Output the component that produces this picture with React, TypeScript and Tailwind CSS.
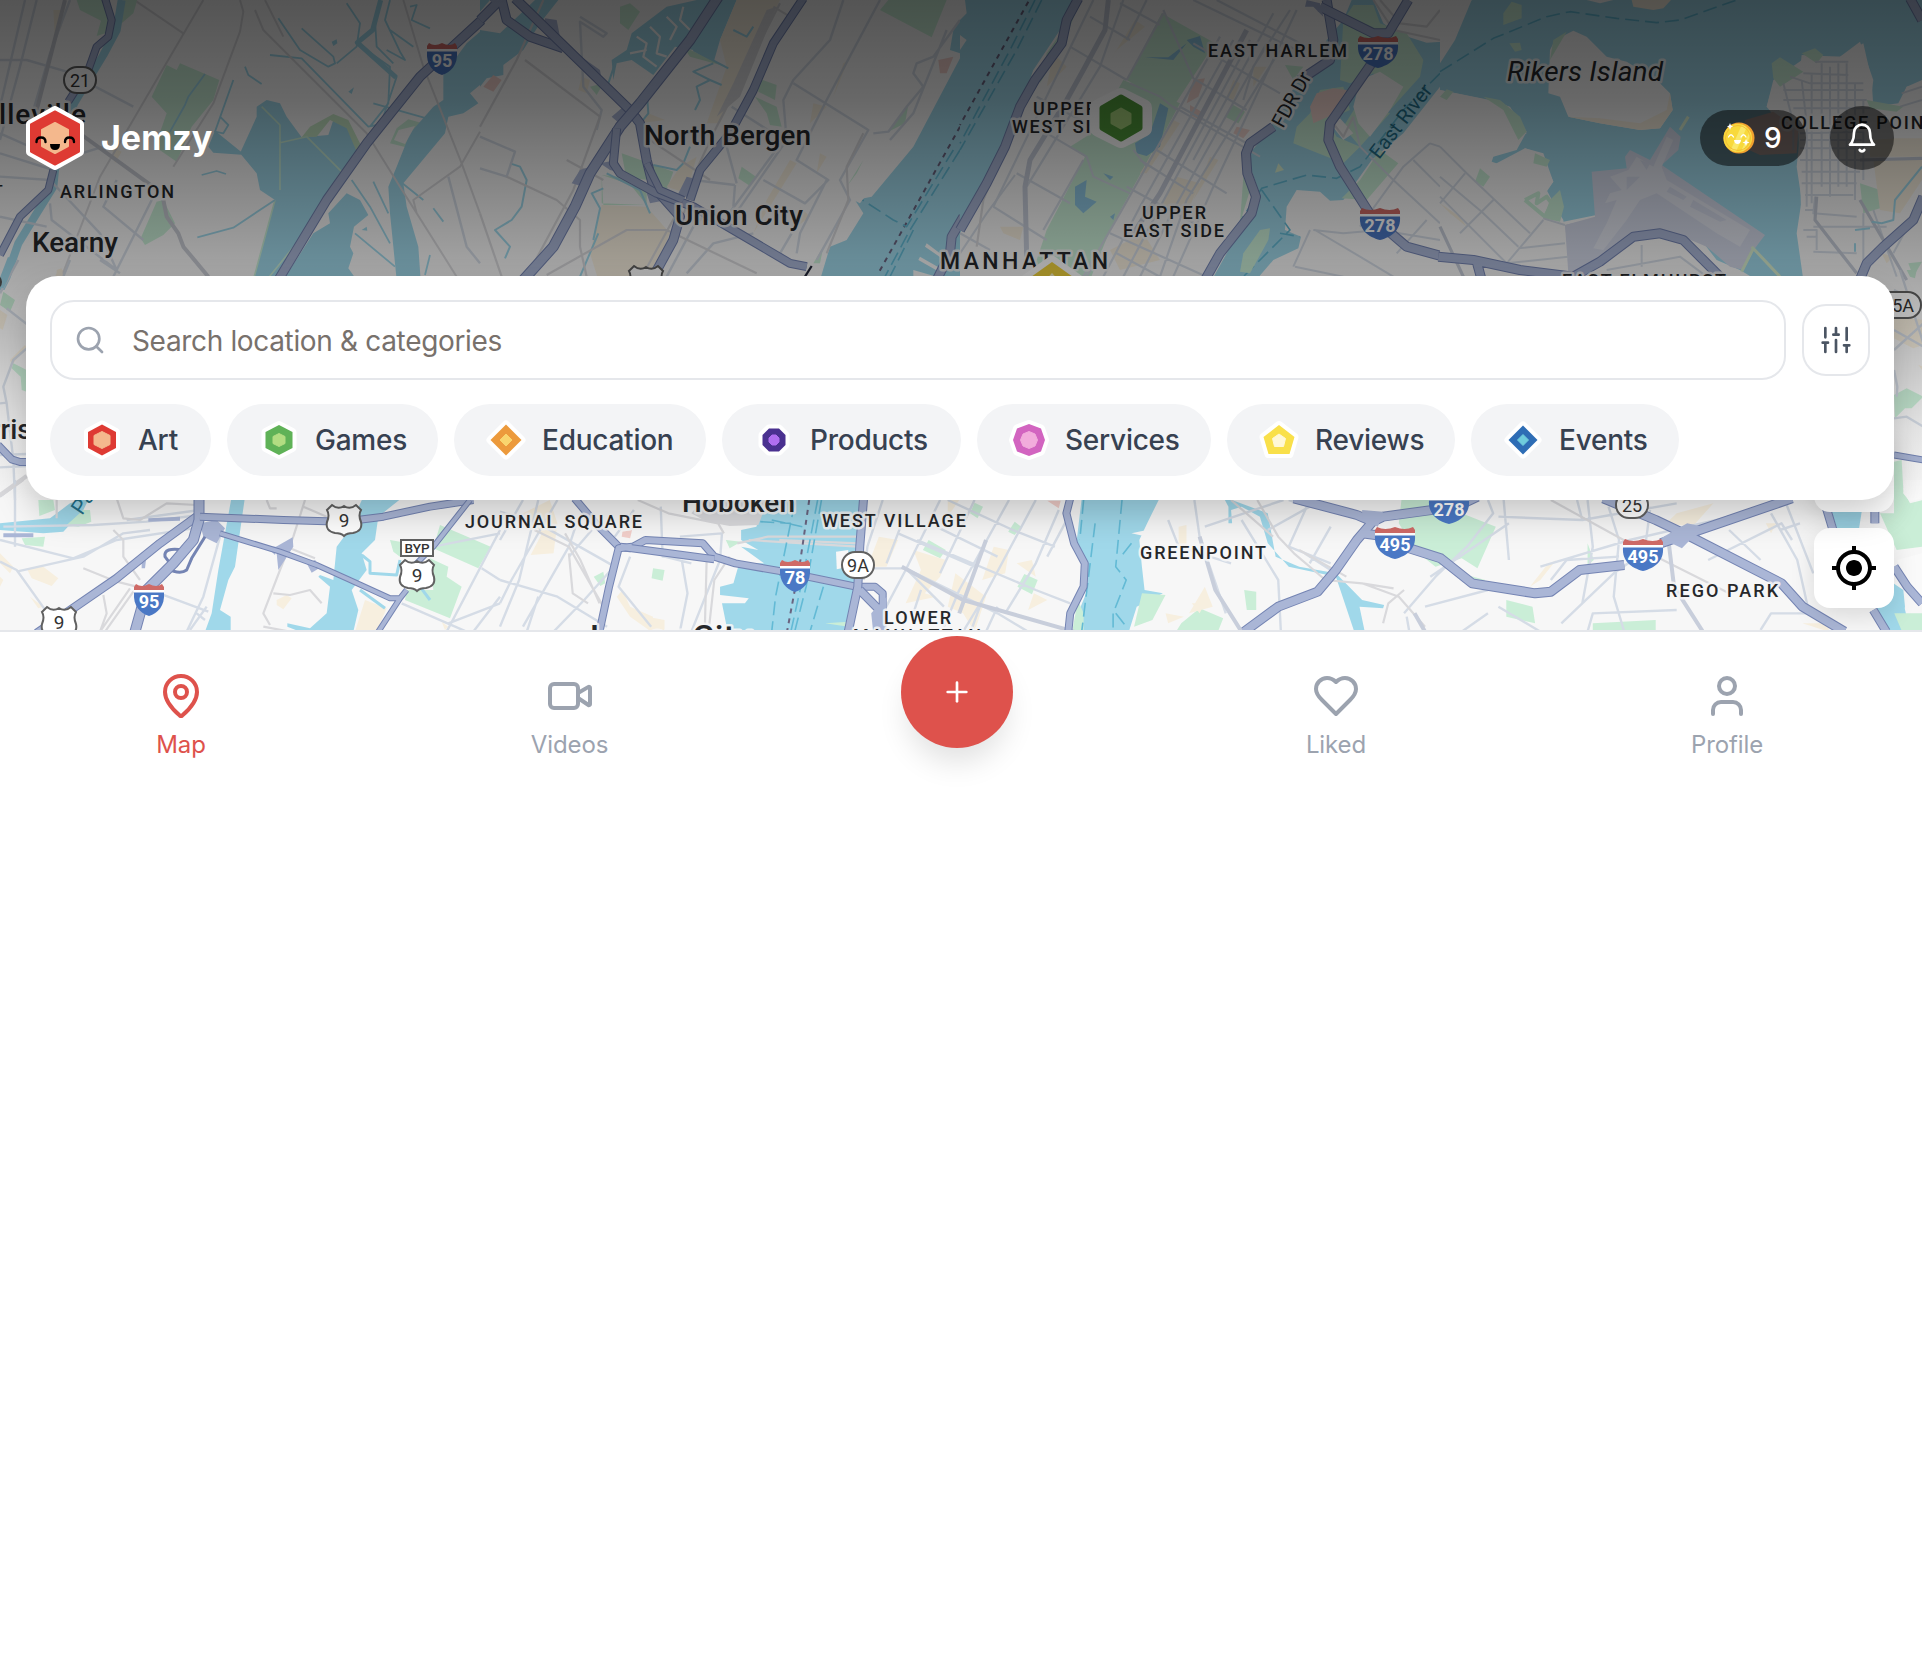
import React from "react";
import { FiBell, FiSearch } from "react-icons/fi";
import { MdMyLocation } from "react-icons/md";
import { MapPin, Video, Plus } from "lucide-react";

const WATER = "#a0d8ea";
const PARK = "#caeed7";
const SAND = "#f7efdf";
const GREY = "#d9d9dc";

function Lines({ d, c = "#d5dce6", w = 2.4, dash }: { d: string; c?: string; w?: number; dash?: string }) {
  return <path d={d} fill="none" stroke={c} strokeWidth={w} strokeDasharray={dash} strokeLinejoin="round" />;
}

function Highway({ d, w = 8 }: { d: string; w?: number }) {
  return (
    <>
      <path d={d} fill="none" stroke="#7484b3" strokeWidth={w + 2} strokeLinejoin="round" />
      <path d={d} fill="none" stroke="#aab6d6" strokeWidth={w} strokeLinejoin="round" />
    </>
  );
}

function Area({ d, c }: { d: string; c: string }) {
  return <path d={d} fill={c} />;
}

function Interstate({ x, y, n }: { x: number; y: number; n: string }) {
  const s = n.length > 2 ? 20 : 15;
  return (
    <g transform={`translate(${x} ${y})`}>
      <path d={`M${-s} -10V-13L${-s + 2} -16Q${-s / 2} -12 0 -16Q${s / 2} -12 ${s - 2} -16L${s} -13V-8H${-s}Z`} fill="#cf6a66" />
      <path d={`M${-s} -10H${s}V-7H${-s}Z`} fill="#fff" />
      <path d={`M${-s} -7.5H${s}C${s + 1} 6 ${s * 0.6} 13 0 16C${-s * 0.6} 13 ${-s - 1} 6 ${-s} -7.5Z`} fill="#4a78c5" />
      <text y="8" textAnchor="middle" fill="#fff" fontSize="18" fontWeight="700">{n}</text>
    </g>
  );
}

function USRoute({ x, y, n = "9" }: { x: number; y: number; n?: string }) {
  return (
    <g transform={`translate(${x} ${y})`}>
      <path
        d="M-12 -15Q-6 -10 0 -14Q6 -10 12 -15L17 -10Q14 -5 17 2Q19 11 9 13Q3 13 0 16Q-3 13 -9 13Q-19 11 -17 2Q-14 -5 -17 -10Z"
        fill="#fff" stroke="#616161" strokeWidth="2"
      />
      {n && <text y="7" textAnchor="middle" fill="#333" fontSize="19">{n}</text>}
    </g>
  );
}

function StateRoute({ x, y, n, w = 32 }: { x: number; y: number; n: string; w?: number }) {
  return (
    <g transform={`translate(${x} ${y})`}>
      <rect x={-w / 2} y="-13" width={w} height="26" rx="13" fill="#fff" stroke="#616161" strokeWidth="2" />
      <text y="6.5" textAnchor="middle" fill="#333" fontSize="18">{n}</text>
    </g>
  );
}

function Label({ x, y, len, size = 18, children, ...rest }: React.SVGProps<SVGTextElement> & { len: number; size?: number }) {
  return (
    <text
      x={x} y={y} textLength={len} fontSize={size} fontWeight={500} fill="#26282b"
      stroke="#f7f7f7" strokeOpacity={0.85} strokeWidth={5} strokeLinejoin="round" paintOrder="stroke" {...rest}
    >
      {children}
    </text>
  );
}

function MapCanvas() {
  return (
    <svg
      width="1922" height="630" viewBox="0 0 1922 630"
      className="block [&_path]:[vector-effect:non-scaling-stroke]"
      style={{ fontFamily: "Roboto, sans-serif" }}
    >
      <defs>
        <clipPath id="clip-west"><rect x="960" y="80" width="131" height="80" /></clipPath>
        <clipPath id="top"><rect width="1922" height="290" /></clipPath>
      </defs>
      <rect width="1922" height="630" fill="#f7f7f7" />

      <g clipPath="url(#top)">
        {/* Kearny and the Meadowlands */}
        <g transform="scale(.33333)">
          <Area c={PARK} d="M230 0H330V95L290 108L303 62L240 30ZM370 0H412L400 40L365 70ZM500 195L530 210L540 190L658 240L640 300L575 380L530 485L465 440L500 340L455 290ZM470 605L490 600L525 670L490 705L435 735L422 715ZM1225 358L1268 370L1230 445L1170 430L1190 385Z" />
          <Area c={WATER} d="M770 320L800 300L840 310L860 350L905 412L985 405L1000 360L1040 360L1050 400L1090 440L1030 530L930 680L830 840H760L825 600L780 570L770 520L745 490L720 460L770 350ZM645 392L735 465L640 458L625 440ZM1040 580L1080 600L1105 645L1062 680L1050 740L1060 760L1045 805L1070 840H850L940 700L990 670L985 640ZM1440 95L1400 130L1330 225V300L1300 320L1230 400L1190 500L1165 560L1170 640L1190 840H1262L1255 740L1220 620L1210 550L1260 490L1335 400L1345 350L1390 340L1435 310L1410 280L1440 255ZM995 125L1010 118L1012 130L1000 138ZM1045 275L1062 262L1055 282ZM1085 690L1100 680L1102 692Z" />
          <Area c="#c6e6c5" d="M905 412L930 380L1000 342L1045 360L1085 440L1070 455L1040 385L990 360L950 410Z" />
          <Area c="#f7f7f7" d="M1196 390L1245 378L1215 432L1182 420Z" />
          <Area c={SAND} d="M160 30L190 30L185 80L165 115ZM335 440L365 455L345 490ZM175 810L190 810L185 830L165 830Z" />
          <Lines c={WATER} w={8} d="M365 0L350 90L310 165L222 310L165 510L160 560L110 640L55 730L20 830L0 870" />
          <Lines c={PARK} w={1.6} d="M785 320L840 375V570M840 428L920 410L1030 520L1085 445M825 600L760 840M1020 520L930 680L800 840" />
          <Lines c={WATER} w={1.8} d="M835 55L900 150L985 200L1005 190L1000 170L905 85M1010 190L1070 140L1080 70L1040 10M1070 130L1170 200L1165 310L1110 380M1140 0L1115 90L1070 125L1190 230L1150 350M1125 60L1130 140L1180 190M1230 20L1250 15L1235 60L1290 85M1170 90L1240 140M810 165L905 175L1105 380L1130 375M605 525L650 513L678 522M592 712L700 683L825 600M700 240L645 395L670 400L685 375L660 350M735 200L745 225L785 252M615 222L565 290L555 315L510 395M1055 540L1110 620L1170 730M1120 545L1165 640M1065 700L1185 800M1195 540L1270 600M1300 625L1330 665M1290 765L1275 825M1120 310L1280 355M1170 0L1155 60L1200 155L1215 180L1160 150" />
          <Lines c={WATER} w={5} d="M1142 0L1118 90L1072 128L1188 232" />
          <Lines c={GREY} w={2} d="M610 0L440 290L300 530L185 830M720 0L730 35L720 95L640 310L520 500M410 5L550 100M765 30L790 90L1100 400L1200 560L1370 830M795 0L850 110M1210 0L1270 200L1385 490L1440 640M1440 395L1380 500L1240 600L1250 640" />
          <Lines d="M75 0L0 320M110 0L60 200L0 420M210 0L150 160L100 330M0 180L80 180L200 215L400 320M0 460L160 510M0 400L180 480L310 440M0 530L150 540L300 700L350 810L460 590M0 650L140 680M350 540L310 620L430 720M150 610L155 660L350 810L340 830M1345 530L1400 740L1440 790" />
          <Lines w={4} c="#c9ccd4" d="M225 390L500 590M195 0L110 330M490 600L500 650L535 700L550 740L625 830" />
          <Highway w={6} d="M315 -5L335 60L325 110L290 140L265 210L205 305" />
          <Highway w={6} d="M160 510L145 570L60 650L0 765" />
          <Highway w={8} d="M1445 60L1260 230L1100 430L980 600L835 840" />
        </g>

        {/* North Bergen and Union City */}
        <g transform="translate(480 0) scale(.33333)">
          <Area c={WATER} d="M0 90L60 100L165 0H235L180 70L130 150L70 195V225L20 235L0 260ZM0 0H30L0 35ZM455 100L560 20L650 0H770L720 120L700 190L640 150L585 140L520 225L455 180L410 190L400 240L395 180L440 150ZM1440 175L1300 440L1175 590L1125 600L1150 640L1100 720L1050 740L1020 840H1440ZM1440 60L1420 90L1410 150L1440 160Z" />
          <Area c={PARK} d="M420 20L450 10L480 35L445 90L420 70ZM425 460L580 515L560 570L505 540L365 525V610L500 615L440 540ZM365 525L500 570V615H370ZM785 500L828 530L810 558L775 535ZM835 235L890 255L885 300L835 275ZM825 290L890 320L905 380L870 375L860 340ZM1200 30L1225 0H1400L1355 112ZM1285 315L1225 395L1275 370ZM1150 480L1100 560L1130 520ZM610 140L740 200L630 170ZM1030 740L1000 790H1020ZM330 260L370 250L350 285Z" />
          <Area c={SAND} d="M365 615L500 620L570 700L510 840H355L330 760ZM770 0L900 0L720 370L680 370L740 200L720 120ZM600 500L560 560L620 580L650 470ZM505 340L555 360L480 370ZM1090 190L1105 180L1060 290ZM1000 310L1040 320L990 370ZM930 480L950 490L820 700L860 600ZM1020 460L1040 470L1010 520ZM960 620L990 650L950 680ZM305 230L330 240L320 280L295 270Z" />
          <Area c="#f0cfca" d="M10 260L40 225L65 240L40 275ZM1375 180L1420 170L1400 220H1380Z" />
          <Area c={GREY} d="M860 30L890 20L780 290L710 350L760 250Z" />
          <Lines c="#f7f7f7" w={2.2} d="M470 110L500 130L490 170L530 200M510 80L540 110L530 160L560 170M560 50L590 80L570 120M610 20L600 60L630 90M450 160L500 150" />
          <Lines c={WATER} w={2} d="M700 190L640 215L690 240L650 260L660 300L645 330M690 240L725 255M500 270L505 340L485 365M630 440L610 490L590 510L520 495M90 490L120 500L140 540L125 620L95 660L45 690L90 740L75 775M370 565L335 580L360 625L340 720M380 520L480 570L510 640M355 700L300 830M405 190L385 250M640 150L745 205M760 90L800 110L820 80" />
          <Lines d="M300 50L380 100L370 110L300 65L310 260L365 330L350 390M1090 0L1050 120L940 240L910 300L920 420L740 680M1200 0L1040 300L950 480L1045 540L975 610L850 540M940 250L1165 390L1080 540L1110 600L1060 690L1010 780M0 410L105 455L80 530L0 505M1440 60L1360 170L1310 190L1300 220L1330 260L1280 320L1225 395L1180 400M755 320L910 420L740 650M640 540L765 555M770 550L740 440M765 555L760 620M935 700L900 760L940 790M1230 420L1300 340L1400 90M1040 540L960 700L950 760M560 830L640 680L700 620M620 820L700 730L820 700" />
          <Lines c={GREY} w={2.2} d="M190 0L110 180L0 380M135 180L360 350L280 570L140 830M80 530L230 600L300 660V740L320 830M0 640L65 830M200 825L440 690L560 690L830 820M480 840L590 640L700 400L900 10M520 840L620 620M370 540L260 480M480 400L690 540M880 20L930 50M1150 400L1100 500L1105 600L1040 760" />
          <Area c="#aab6d6" d="M395 350L430 320L460 350L430 380ZM275 550L300 510L330 500L310 560ZM360 490L410 480L430 520L390 510ZM500 580L540 560L560 600L510 610ZM195 55L230 60L240 110L190 80ZM310 175L360 210L365 240L300 190ZM620 530L660 540L640 590L590 590Z" />
          <Highway w={8} d="M60 0L0 60M30 0L60 -20L80 60L150 110L250 145" />
          <Highway w={8} d="M105 -5L280 165L450 330L480 370L500 480L520 560L600 650L580 720L520 830" />
          <Highway w={9} d="M715 -10L630 120L480 310L420 380L330 520L285 620L220 740L130 840" />
          <Highway w={7} d="M410 385L400 490L420 520L530 580L640 620L760 690L930 790L980 800" />
          <Highway w={7} d="M970 -5L880 130L820 270L750 400L660 510L630 600" />
          <Highway w={6} d="M500 490L540 570L610 600" />
          <Lines c="#222638" w={2.2} d="M995 798L975 830" />
          <Lines c="#6a6480" w={2} dash="5 5" d="M1440 380L1195 820" />
          <Lines c="#63bad5" w={1.6} dash="14 6" d="M1440 450L1290 690L1215 830M1420 450L1280 680L1240 660L1140 595M1300 690L1230 830" />
          <Area c="#f7f7f7" d="M1300 810L1370 830H1300ZM1340 730L1400 775V785L1335 740ZM1320 770L1390 810L1385 820L1315 780ZM1120 600L1150 570L1155 590L1140 610ZM1210 500L1230 495L1225 520Z" />
          <Highway w={8} d="M1450 650L1415 710L1410 760L1370 840" />
        </g>

        {/* Manhattan, Central Park and the East River */}
        <g transform="translate(960 0) scale(.33333)">
          <Area c={WATER} d="M0 0H345L300 90L220 210L180 320L130 440L60 600L0 700ZM1100 120L1150 60L1175 0H1440V260L1330 400L1235 480L1150 600L1110 602L1080 575L1010 570L980 620L975 690L1023 710L1015 745L940 780L880 850H750L850 670L895 570L860 470L920 400L1010 250L1080 200Z" />
          <Area c="#f7f7f7" d="M0 60L20 40L15 0H0ZM0 105L20 120L0 150ZM1240 0H1446V125L1400 128L1310 100L1270 70Z" />
          <Area c={PARK} d="M605 40L765 130L640 320L500 240ZM330 440L410 390L580 450L450 690L390 840H210L260 690L375 470ZM490 240L660 310L580 460L400 400ZM820 315L855 335L835 370L795 350ZM1150 60L1180 15L1240 15L1260 70L1340 100L1390 180L1380 230L1290 330L1240 220L1170 250L1140 240ZM1080 270L1150 260L1170 330L1100 360L1130 410L1200 440L1150 490L1050 450L1000 430L1010 380L1050 340ZM1200 440L1290 340L1200 300L1150 380ZM1260 450L1315 490L1220 600L1145 595L1200 540ZM850 530L870 570L840 670ZM975 195L1030 200L1000 240ZM350 30L310 130L240 250L260 160Z" />
          <Area c="#f7f7f7" d="M1200 240L1260 215L1330 260L1290 330L1230 410L1195 370L1180 320ZM1110 370L1140 355L1180 400L1150 420Z" />
          <Area c="#f2d6d0" d="M1070 280L1120 265L1160 270L1150 330L1060 370L1050 320ZM700 240L735 235L715 290L680 310ZM830 380L870 390L850 415L820 400ZM690 315L725 335L720 360L690 345Z" />
          <Area c={SAND} d="M525 60L555 80L470 150L420 230ZM650 530L720 550L680 640L600 620ZM120 680L190 680L180 720L130 700ZM820 240L840 250L820 300L800 290ZM640 360L660 370L560 520L540 520ZM750 470L775 480L700 600ZM450 750L550 700L600 780L480 810ZM280 160L320 200L260 260ZM880 200L920 200L880 260Z" />
          <Area c="#8fc7e3" d="M680 120L720 108L735 160L700 140ZM600 310L625 325L600 440L560 468L530 460L525 430L570 400ZM345 560L380 540L375 590L410 605L370 640L345 615ZM430 520L460 530L450 540ZM450 650L465 640L460 660ZM555 172H625L680 130L640 180Z" />
          <Lines w={2.2} d="M390 50L510 120M610 30L700 235L860 330M330 140L500 240M640 320L900 470M230 290L400 380M210 370L380 470M170 520L330 610M100 620L260 720M0 700L90 750M480 10L600 75M700 130L960 280M500 560L740 690M590 450L800 580M540 480L700 580M660 320L860 430M400 0L100 620M490 0L420 200L200 560M610 40L500 240M370 480L250 690M780 110L480 640L370 830M820 120L540 620L430 830M870 120L590 640L490 830M920 130L640 630L540 830M960 150L680 600L600 830M1010 30L760 560L640 830M700 0L1010 150M770 0L1020 130M940 40L700 480M560 0L500 120M990 30L880 200L850 300M450 700L740 830M470 760L600 830M380 830L420 760" />
          <Lines w={5} c="#c8cedb" d="M445 0L435 90L370 210L320 300L210 480L195 560L200 770M860 90L600 580L520 700" />
          <Lines w={2} d="M510 250L600 290L650 330M380 470L400 530L510 580M520 450L560 500M165 525L80 640L0 760M1360 480L1440 560M1060 690L1150 700L1260 690L1440 720M1065 690L1200 770L1300 830M1410 430L1330 500L1200 680M1440 440L1410 430M1400 660L1310 760M1005 800L1150 830M1000 800L1050 690M1180 350L1200 440L1300 540L1440 670" />
          <Lines c={GREY} w={2.2} d="M1240 0L1300 90L1440 120M1260 0L1320 70L1400 80L1440 30M110 500L70 600L50 740M1120 370L1150 410L1180 350" />
          <Lines c="#63bad5" w={1.6} dash="14 6" d="M245 0L170 150L0 450M225 0L150 150L0 430M1440 220L1330 330L1200 500L1130 535L1040 525L905 565L850 650L760 790M905 570L990 690L900 780L850 830M960 700L1020 710" />
          <Lines c="#6a6480" w={2} dash="5 5" d="M205 5L0 375" />
          <Area c={PARK} d="M900 690L930 685L925 720L870 820L840 815L850 760Z" />
          <Area c="#d9efd0" d="M955 490L972 510L945 518Z" />
          <Highway w={8} d="M355 -5L320 60L305 130L225 240L180 320L135 440L80 550L0 690" />
          <Highway w={8} d="M1100 0L1120 120L1110 180L1020 240M940 380L870 430L858 460L862 520L888 590L875 640L780 760L735 840" />
          <Highway w={8} d="M1080 20L1240 100L1285 100L1345 0M1235 190L1110 370L1105 420L1140 500L1235 650L1340 740L1450 770" />
          <Area c="#aab6d6" d="M1040 0L1080 10L1090 50L1060 20L1035 20ZM255 180L290 160L270 190Z" />
        </g>

        {/* Rikers Island, LaGuardia and College Point */}
        <g transform="translate(1440 0) scale(.33333)">
          <Area c={WATER} d="M95 0H1446V250L1400 260L1375 310L1300 320L1295 240L1270 130L1200 170L1085 165L1080 210L1000 250L980 320L1020 370L1075 400L1080 520L1085 700L1100 840H950L900 810L830 780L690 600L370 665L320 570L340 545L310 460L255 445L200 500L140 480L260 400L190 310L0 270V190L45 120Z" />
          <Area c="#f7f7f7" d="M330 150L345 120L400 92L440 110L500 170L560 185L650 240L690 280L698 330L660 385L600 390L480 370L385 350L360 290L325 280ZM0 270L150 300L210 320L260 395L230 450L160 470L150 500L255 445L300 460L320 500L340 545L320 575L370 660L380 840H0ZM1000 240L1100 170L1200 170L1260 125L1300 240L1290 320L1370 330L1400 260L1446 240V840H1090L1070 700L1085 600L1070 500L1080 400L1050 360L980 320ZM0 120L95 0H0ZM440 0H520L480 10Z" />
          <Area c={PARK} d="M190 40L215 5L245 15L245 55L190 75ZM208 130L240 128L245 150L225 155ZM995 190L1020 172L1090 215L1020 260L1000 235ZM1085 160L1125 145L1150 165L1130 190ZM1280 300L1390 320L1370 335L1290 325ZM1260 550L1320 570L1320 625L1270 640ZM120 505L150 530L130 560L105 545ZM130 290L180 300L240 350L260 395L235 420L190 330ZM330 600L360 570L372 620L360 665L310 655ZM285 460L330 480L320 500L280 490ZM0 290L20 268L40 275L20 300ZM340 120L380 95L330 180ZM1405 790L1446 785L1420 830Z" />
          <Lines c={PARK} w={4} d="M255 600L295 580L290 610L320 590L335 610L315 650L255 600" />
          <Area c={SAND} d="M575 0H693L670 25L640 30L580 20ZM690 280L698 330L660 385L600 390L480 370L385 350L480 355L600 370L680 330ZM1300 480L1446 480V540L1380 640L1320 630ZM1370 415H1446V470H1290V420ZM0 610L60 650L80 680L30 640ZM1325 760L1360 770L1340 790Z" />
          <Area c="#f2d6d0" d="M915 360L1000 335L1075 390L1070 460L960 465L905 440Z" />
          <Area c="#d3d8e8" d="M455 515L560 505L555 470L570 450L630 480L690 380L722 410L715 450L665 495L975 705L945 745L910 810L870 800L800 740L740 715L640 700L570 720L470 790L390 800L375 675L465 650Z" />
          <Area c="#d3d8e8" d="M375 675L470 655L640 690L480 790L440 820L385 820Z" />
          <Area c="#e1e4ee" d="M510 530L565 510L590 470L640 500L680 410L700 420L665 500L680 540L930 690L900 740L830 700L650 580L600 600L560 660L490 750L460 745L500 670L530 600L495 610L510 580L545 570Z" />
          <Area c="#d3d8e8" d="M560 530L600 530L560 570ZM690 560L740 590L730 600L680 575ZM760 600L860 660L840 665L750 620ZM600 480L630 490L620 510Z" />
          <Lines d="M1030 250L1060 370V450M1085 240L1100 370V620M1115 220V610M1145 190V560M1170 200V590M1195 190V560M1220 190V560M1245 250V600M1270 300V540M1125 185H1225M1090 220L1225 225M1050 230L1110 250H1270M1030 270H1270M1030 300H1280M1060 325H1290M1080 400L1270 395M1080 420H1265M1080 445H1260M1080 480H1260M1085 515H1260M1085 550H1250M1095 585H1240M1125 590L1120 640L1250 650M1095 630H1125V660L1200 760M1090 690H1130V750M1120 680H1340M1100 710H1130M1120 755L1250 760M1270 640V780M1385 280L1446 260M1380 320L1446 300" w={2} />
          <Lines w={2} d="M0 440L80 520L270 700M75 520L0 610M0 530L125 635L235 740M160 600L60 700M235 745L375 730M200 790L385 770M310 660L200 790M0 590L200 790M310 655L375 675M605 735V800M500 810L720 770L800 830M1446 600L1360 760M1300 630L1370 830" />
          <Lines w={3.2} c="#c6ccd8" d="M1260 480L1446 475M1260 600L1400 840M1130 590L1125 660L1250 820M0 680L70 830" />
          <Lines c={WATER} w={2} d="M1446 500L1365 600L1360 660L1325 670L1295 665M1245 730V755M1245 690L1290 685" />
          <Lines c="#d9efd0" w={3} d="M935 740L1020 830M940 745L905 815M720 390L745 350" />
          <Lines c="#63bad5" w={1.6} dash="14 6" d="M0 215L160 115L320 50L390 35L530 55L650 68L720 60L890 0" />
          <Highway w={8} d="M-5 770L100 780L240 810L400 830L480 785L580 710L660 700L730 720L780 770L850 840M110 785L125 840M1410 -5L1446 60M1450 590L1420 660L1330 740L1280 790L1255 850" />
        </g>
      </g>

      {/* Harrison */}
      <g transform="translate(0 260) scale(.33333)">
        <Area c={PARK} d="M10 95L45 120L30 155L0 135ZM40 310L80 330V395L65 390L62 350L35 325Z" />
        <Area c={SAND} d="M0 150L22 165L8 210L0 205ZM75 255L80 262L35 315L30 300ZM170 30L185 25L190 50H170Z" />
        <Lines d="M55 0L0 100M20 145L80 192M80 265L40 300L10 380L20 430L40 600L45 720M0 430L20 428M0 622L80 618M0 710L80 650M0 585L80 582M210 0L190 50M300 0L360 40" />
        <Lines c={GREY} w={4} d="M0 705L80 648" />
        <Lines c={WATER} w={8} d="M35 -5L10 60L0 80" />
        <Highway d="M-6 555L35 598L60 606H90" w={6} />
      </g>
      <circle cx="-6" cy="282" r="8" fill="#555" />

      {/* Flushing */}
      <g transform="translate(1780 270) scale(.33333)">
        <Area c={PARK} d="M380 0H410L405 25L390 20ZM342 375L380 355L430 380L395 415L375 415L345 445ZM342 575L365 570L370 660L390 700L430 690V830L350 840L300 730H342Z" />
        <Area c={SAND} d="M342 140L430 150V225L400 235L380 225L342 205ZM415 285L430 290V305Z" />
        <Area c={WATER} d="M155 725H245L235 790H175ZM340 940L370 960L375 1010L345 1090H315L320 1050Z" />
        <Lines d="M360 0L430 220M342 60L430 100M342 240L430 160M342 180L430 230M342 300L352 350L350 380M342 445L380 440L430 470M0 780L60 760M20 705L100 910" />
        <Highway w={5} d="M342 555L430 570" />
      </g>

      {/* Newark Bay */}
      <g transform="translate(0 480) scale(.33333)">
        <Area c={WATER} d="M0 130L150 115L210 70L270 50L250 90L190 155L130 160L0 150ZM695 50H735L705 260L685 300L660 390L692 410V455H615L635 400L655 270ZM1090 50H1210L1135 110L1125 180L1085 220L1100 270L1055 330L1075 390L1060 455H900L862 440V430L930 445L980 400L990 320L955 290L960 285L1000 300L1010 200L1040 160Z" />
        <Area c={PARK} d="M115 60H160L165 90L118 108ZM65 175L135 170L130 200L75 195ZM250 90L270 90L274 125L235 140L200 135ZM1320 135L1472 200L1435 265L1300 205ZM1290 235L1345 260L1340 290L1385 320L1350 415L1215 360L1220 330L1300 330ZM1170 180L1200 185V230L1180 215Z" />
        <Area c={SAND} d="M0 220L40 260L30 280L0 250ZM80 265L130 260L175 295L155 318L95 295ZM830 360L860 345L875 355L850 388L830 375ZM1095 360L1160 385L1130 455H1065ZM90 350L130 380L115 385ZM0 290L10 300L0 320ZM1325 425L1345 440L1335 450Z" />
        <Lines c={WATER} w={3} d="M1085 225L1110 245V280L1190 285L1200 240M1080 330L1155 385M1260 320L1290 360" />
        <Lines d="M0 180L220 235L350 180L580 145M45 0V200M10 140L280 135L440 125L600 105M0 245L50 270L150 410M50 275L250 230L370 160L450 150M620 380L570 450M660 170L610 350L560 455M490 345L625 395M590 400L615 420M380 120L600 90M1500 150L1340 455M1205 370L1400 455M1500 300L1445 265M1500 350L1420 455M1210 180L1300 200L1500 160M1345 430L1500 370" />
        <Lines c={GREY} w={2.2} d="M0 50L70 0M170 60V115M350 55L370 115L420 120L500 70L590 75M340 150L370 180V230L420 300M250 265L350 305L410 320M310 345L320 400L300 455M390 325L300 455M400 335L315 455M800 60L810 85L830 85M915 60L880 170M880 170L840 270L790 400L810 435M790 440L870 455M820 340L870 345L930 330L965 370M870 205L945 235M910 80L980 110" />
        <Area c="#aab6d6" d="M600 130L650 120L675 145L650 190L610 170ZM828 200L878 172L880 200L835 270ZM800 200L830 200L825 225ZM920 250L945 240L965 260L935 278ZM445 115L540 110V122L445 125ZM425 250L438 240L435 265H425ZM10 160H100V172H10Z" />
        <Lines c="#7484b3" w={3} d="M550 210Q490 200 495 230L510 250L500 265Q540 285 560 270L575 235L615 170" />
        <Highway w={7} d="M590 110L480 190L350 295L190 405L110 460" />
        <Highway w={9} d="M597 50V120L580 180L520 250L440 330L405 455" />
        <Highway w={6} d="M600 110L850 120L1030 125L1150 110L1290 80L1420 60" />
        <Highway w={4} d="M660 160L840 215L950 255L1050 300L1170 355H1200L1220 330M1240 260L1300 200L1410 60M1200 355L1135 455" />
      </g>

      {/* Hoboken and the Hudson */}
      <g transform="translate(500 480) scale(.3827 .33333)">
        <Area c={WATER} d="M690 55H945V170L935 315L910 455H595L580 370H640L650 355L575 345V320L610 310L625 250H690L630 200L675 210L630 180V150L670 140ZM1520 55H1570V455H1525L1500 430L1535 330V260L1505 200Z" />
        <Area c={GREY} d="M500 100L530 60H700L675 135L600 138L540 125Z" />
        <Area c={PARK} d="M400 265L430 270L425 302L396 295ZM245 290L270 275L275 310L262 318ZM1120 180L1165 210L1150 235L1105 210ZM1370 282L1405 300L1390 343L1352 320ZM1240 68L1262 80L1248 115L1228 100ZM1345 125L1362 140L1345 165L1328 155ZM590 180L630 185L600 205ZM1510 360L1525 400V455H1495ZM850 430L910 425V440Z" />
        <Area c={SAND} d="M60 100L130 60L150 130L140 220L80 225L110 160ZM320 330L340 380L400 410L395 455L340 410L305 350ZM385 410L430 420V455H390ZM1080 210L1165 240L1150 290L1110 340L1140 350L1060 370L1100 270ZM1190 280L1270 350L1240 455L1210 400L1170 380ZM1290 200L1330 210L1320 280L1260 300ZM1350 250L1390 240L1400 290ZM990 170L1040 180L1010 260L960 260ZM1170 60L1200 60L1170 110ZM1395 340L1430 360L1380 390Z" />
        <Area c="#f2cfca" d="M320 155L345 150L340 175L318 170ZM1430 62H1465L1460 85Z" />
        <Area c="#f7f7f7" d="M878 215L910 210V260L880 268Z" />
        <Lines d="M0 95L100 130L300 260M60 60L0 180M150 60L90 180L30 300L0 370M200 130L180 200L60 440M0 300L150 350L280 440M100 60L50 300L0 440M240 150L180 230M290 270L220 360L140 455M350 90L300 170M420 80L425 230L560 240M470 170L580 160L575 240L500 455M340 230L310 320L395 440M100 350L70 455M430 230L500 250M475 240L490 340L470 455M1000 60L960 200L950 300M1060 100L1010 250M1150 60L1060 270L1000 400M1240 60L1150 280M1330 60L1200 330L1160 440M1400 60L1260 360L1210 455M1460 90L1400 250L1320 400M1170 60L1340 150L1450 200M1140 140L1300 230M1090 180L1400 330L1490 370M1050 260L1140 310L1300 400L1380 455M1040 160L1240 260M960 265H1060L1160 380M1100 330L1080 400M1260 360L1230 455M1300 380L1270 455M1490 100L1430 230" />
        <Lines c={GREY} w={2.2} d="M90 150L180 200L270 380M170 160L210 240L260 370M180 220L190 340L230 370M360 60L440 100L570 130L585 160M600 230L560 300L545 455M540 240L535 455M620 190L700 170L935 170M650 180L935 200M730 180L935 190" />
        <Lines c="#c8cedb" w={4} d="M1050 260L1210 360L1500 455M1270 180L1200 400" />
        <Lines c="#63bad5" w={1.6} dash="14 6" d="M770 70L720 350L710 455M830 60L790 300L760 455M840 60L800 320L770 455M845 320L810 455M710 120L790 140M1525 60L1515 180M1555 130L1520 455M680 125L760 130" />
        <Lines c="#6a6480" w={2} dash="5 5" d="M808 60L785 240L750 455" />
        <Highway w={6} d="M195 55L250 130L310 200L340 205L380 180L530 190L560 230L615 250L740 275L930 320L980 320L1000 340V400" />
        <Highway w={6} d="M315 200L560 238M345 200L310 205L285 320L260 455" />
        <Highway w={7} d="M950 55L940 200L935 320L910 455M940 330L1000 400" />
        <Highway w={6} d="M1490 55L1480 100L1500 190L1528 250L1525 320L1490 400L1485 455" />
        <Area c="#aab6d6" d="M970 400L1010 350V455H975Z" />
      </g>

      {/* Greenpoint and Queens */}
      <g transform="translate(1100 480) scale(.52425 .33333)">
        <Area c={WATER} d="M0 50H115L90 130L75 180L80 260L85 330L120 340L70 380L55 455H0ZM235 50L320 100L335 230L380 260L450 280L500 360L542 375L540 385L495 380L505 455H485L450 290L360 260L320 190L305 110L270 80L250 90L252 130H245V80ZM1500 300L1530 350L1540 420L1530 455H1495L1480 380Z" />
        <Area c="#f7f7f7" d="M60 160L90 150V170Z" />
        <Area c={PARK} d="M575 60H635L650 110L690 100L755 140L720 265L690 235L640 260L600 210L570 130ZM80 340L125 345L100 420L65 440ZM275 330L298 335V390H280ZM190 385L235 415L225 455H145L155 430ZM775 360L825 380L830 430L775 410ZM940 430L1060 420V455H940ZM700 285L735 300L715 320ZM930 190L942 240L930 255ZM1515 400H1568V455H1530Z" />
        <Area c="#fafafa" d="M1535 0H1568V55L1545 65L1532 40ZM1520 240L1568 220V370Z" />
        <Area c={SAND} d="M150 140L165 135V200L150 210ZM200 320L215 380L170 400ZM125 400L160 410L130 430ZM850 260L870 240L840 300L820 320ZM1100 100L1170 70L1130 140L1080 130ZM1270 130L1290 130L1280 160ZM1340 430L1390 430V455ZM175 370L200 370L190 400Z" />
        <Lines d="M180 60L190 170L240 400M130 120L150 200L250 250M270 120L340 300L345 455M390 220L440 270M360 60L400 80L320 150M400 60L360 200L440 250M440 140L400 250M740 60L750 100L700 200L640 290L580 400M760 110L920 120L1100 70M770 60L780 240M780 130L630 290M930 60L940 200L920 370M910 60L920 120M970 80L990 180L980 350L1000 455M1050 80L1040 200M1160 240L1300 130L1320 180M1280 100L1330 240L1350 380M585 410L590 455M740 400L690 455M620 380L740 330M860 300L890 240L990 230M840 260L1010 180L1230 100M1260 450L1280 400L1350 400M1200 150L1260 240M880 430L980 280L1080 170M760 380L840 455M1100 390L940 400L930 455M200 140L350 60" />
        <Lines c={GREY} w={2.2} d="M300 60L340 170L370 220L430 300L500 310L570 350L620 440M250 60L330 170M860 60L1010 190L1200 340M380 210L470 290M540 430L550 370L580 330M500 310L560 325" />
        <Lines c="#c8cedb" w={4} d="M1085 190L1095 320L1150 455M190 170L220 330L270 455M600 400L620 455" />
        <Lines c="#63bad5" w={1.6} dash="14 6" d="M42 60L30 260L50 300L25 400V455M60 190L40 230M30 400L50 440" />
        <Highway w={8} d="M370 55L490 105L520 125L540 110L680 80L720 50M520 125L490 180L450 270L415 335L340 380L275 455M590 205L650 235L710 310L830 340L860 335L915 270L1000 255M500 160L550 170" />
        <Highway w={8} d="M960 55L1060 120L1120 165L1300 310L1340 380L1420 455M1070 190L1320 55" />
        <Highway w={7} d="M1380 55L1400 160M1478 55V130M1515 260L1540 320L1568 370M1475 390L1500 455" />
        <Area c="#aab6d6" d="M1070 175L1120 130L1150 140L1110 205ZM500 90L540 95L530 140L500 120Z" />
      </g>

      {/* place names */}
      <Label x={-36} y={124} len={122} size={28}>Belleville</Label>
      <Label x={60} y={198} len={114}>ARLINGTON</Label>
      <Label x={-8} y={198} len={11} fontWeight={400}>T</Label>
      <Label x={32} y={252} len={86} size={28}>Kearny</Label>
      <Label x={-44} y={439} len={107} size={28}>Harrison</Label>
      <Label x={644} y={145} len={167} size={28}>North Bergen</Label>
      <Label x={675} y={225} len={128} size={28}>Union City</Label>
      <Label x={1208} y={57} len={139}>EAST HARLEM</Label>
      <g clipPath="url(#clip-west)">
        <Label x={1033} y={115} len={64}>UPPER</Label>
        <Label x={1012} y={133} len={104}>WEST SIDE</Label>
      </g>
      <Label x={1142} y={219} len={64}>UPPER</Label>
      <Label x={1123} y={237} len={101}>EAST SIDE</Label>
      <Label x={940} y={269} len={168} size={23}>MANHATTAN</Label>
      <Label x={1507} y={81} len={156} size={28} fontStyle="italic" fontWeight={400}>Rikers Island</Label>
      <Label x={1781} y={129} len={155}>COLLEGE POINT</Label>
      <Label x={1562} y={287} len={164}>EAST ELMHURST</Label>
      <Label x={465} y={528} len={177}>JOURNAL SQUARE</Label>
      <Label x={682} y={512} len={113} size={28}>Hoboken</Label>
      <Label x={822} y={527} len={144}>WEST VILLAGE</Label>
      <Label x={884} y={624} len={67}>LOWER</Label>
      <Label x={853} y={642} len={128}>MANHATTAN</Label>
      <Label x={580} y={649} len={172} size={34}>Jersey City</Label>
      <Label x={1140} y={559} len={126}>GREENPOINT</Label>
      <Label x={1666} y={597} len={112}>REGO PARK</Label>
      <Label x={0} y={0} len={60} size={20} fontWeight={400} transform="translate(1283 129) rotate(-61)">FDR Dr</Label>
      <Label x={0} y={0} len={88} size={20} fontWeight={400} fill="#23708a" stroke="none" transform="translate(1379 160) rotate(-52)">East River</Label>
      <Label x={0} y={0} len={92} size={21} fontWeight={400} fill="#23708a" stroke="none" transform="translate(82 516) rotate(-56)">Passaic R</Label>

      <StateRoute x={80} y={80} n="21" />
      <Interstate x={442} y={59} n="95" />
      <USRoute x={646} y={281} n="" />
      <Interstate x={1378} y={52} n="278" />
      <Interstate x={1380} y={224} n="278" />
      <StateRoute x={1898} y={305} n="25A" w={46} />
      <USRoute x={344} y={520} />
      <rect x="401" y="540" width="32" height="16" fill="#fff" stroke="#616161" strokeWidth="2" />
      <text x="417" y="553" textAnchor="middle" fontSize="13.5" fontWeight="500" fill="#333">BYP</text>
      <USRoute x={417} y={575} />
      <USRoute x={59} y={622} />
      <Interstate x={149} y={600} n="95" />
      <Interstate x={795} y={576} n="78" />
      <StateRoute x={858} y={565} n="9A" />
      <Interstate x={1449} y={508} n="278" />
      <Interstate x={1395} y={543} n="495" />
      <Interstate x={1643} y={555} n="495" />
      <StateRoute x={1632} y={505} n="25" />

      {/* pins */}
      <path d="M1121 97L1143 108V128L1121 139L1099 128V108Z" fill="#fff" stroke="#fff" strokeWidth="18" strokeLinejoin="round" />
      <path d="M1121 97L1140 108V128L1121 139L1102 128V108Z" fill="#4f9739" stroke="#4f9739" strokeWidth="5" strokeLinejoin="round" />
      <path d="M1121 109L1130 114V123L1121 128L1112 123V114Z" fill="#a3cc78" stroke="#a3cc78" strokeWidth="3" strokeLinejoin="round" />
      <path d="M1052 262L1080 282L1070 310H1034L1024 282Z" fill="#f1d33d" stroke="#fff" strokeWidth="12" strokeLinejoin="round" paintOrder="stroke" />
      <path d="M1052 273L1062 284H1042Z" fill="#fff6c8" />
    </svg>
  );
}

function Gem({ points, inner, color, core }: { points: string; inner: string; color: string; core: string }) {
  return (
    <svg width="40" height="40" viewBox="-20 -20 40 40" className="block shrink-0 overflow-visible">
      <polygon points={points} fill="#fff" stroke="#fff" strokeWidth="8" strokeLinejoin="round" />
      <polygon points={points} fill={color} />
      <polygon points={inner} fill={core} stroke={core} strokeWidth="1" strokeLinejoin="round" />
    </svg>
  );
}

const categories = [
  { name: "Art", width: "w-[161px]", color: "#de3a33", core: "#f4b88d", points: "0,-15.5 14,-8 14,8 0,15.5 -14,8 -14,-8", inner: "0,-8.5 8,-4.5 8,4.5 0,8.5 -8,4.5 -8,-4.5" },
  { name: "Games", width: "w-[211px]", color: "#5fb257", core: "#b2dd82", points: "0,-15 13.5,-8 13.5,8 0,15 -13.5,8 -13.5,-8", inner: "0,-6.5 6,-3.5 6,3.5 0,6.5 -6,3.5 -6,-3.5" },
  { name: "Education", width: "w-[252px]", color: "#ec9a3c", core: "#f9d56e", points: "0,-15.5 15.5,0 0,15.5 -15.5,0", inner: "0,-6 6,0 0,6 -6,0" },
  { name: "Products", width: "w-[239px]", color: "#4a3190", core: "#b06ff0", points: "-5,-11.5 5,-11.5 11.5,-5 11.5,5 5,11.5 -5,11.5 -11.5,5 -11.5,-5", inner: "-2,-5 2,-5 5,-2 5,2 2,5 -2,5 -5,2 -5,-2" },
  { name: "Services", width: "w-[234px]", color: "#d264c0", core: "#f2acdc", points: "0,-16 12,-11.5 16,0 12,11.5 0,16 -12,11.5 -16,0 -12,-11.5", inner: "0,-8.5 6,-6 8.5,0 6,6 0,8.5 -6,6 -8.5,0 -6,-6" },
  { name: "Reviews", width: "w-[228px]", color: "#f9e04a", core: "#fff8d6", points: "0,-15 15.5,-3 10.5,14 -10.5,14 -15.5,-3", inner: "0,-6 6.5,-1.5 4.5,6.5 -4.5,6.5 -6.5,-1.5" },
  { name: "Events", width: "w-[208px]", color: "#2e6db5", core: "#6fcbdc", points: "0,-14.5 14.5,0 0,14.5 -14.5,0", inner: "0,-5.5 5.5,0 0,5.5 -5.5,0" },
];

function Stroke({ size, children }: { size: number; children: React.ReactNode }) {
  return (
    <svg width={size} height={size} viewBox="0 0 24 24" fill="none" stroke="currentColor" strokeWidth="2" strokeLinecap="round" strokeLinejoin="round">
      {children}
    </svg>
  );
}

function Logo() {
  return (
    <svg width="58" height="64" viewBox="0 0 58 64" className="block">
      <path d="M29 4L54 18V46L29 60L4 46V18Z" fill="#fff" stroke="#fff" strokeWidth="8" strokeLinejoin="round" />
      <path d="M29 5.5L53 18.5V45.5L29 58.5L5 45.5V18.5Z" fill="#de3a33" stroke="#de3a33" strokeWidth="2" strokeLinejoin="round" />
      <path d="M29 17L42 24V40L29 47L16 40V24Z" fill="#f4b88d" stroke="#f4b88d" strokeWidth="2" strokeLinejoin="round" />
      <path d="M10.500 36Q10.500 31.500 15 31.500Q19.500 31.500 19.500 36M39 36Q39 31.500 43.500 31.500Q48 31.500 48 36" fill="none" stroke="#000" strokeWidth="2.4" strokeLinecap="round" />
      <path d="M24 38H34Q34 44 29 44Q24 44 24 38Z" fill="#000" />
    </svg>
  );
}

function Coin() {
  return (
    <svg width="32" height="32" viewBox="0 0 32 32" className="block">
      <defs>
        <clipPath id="coin"><circle cx="15" cy="16" r="13.5" /></clipPath>
      </defs>
      <circle cx="16" cy="16" r="15.5" fill="#f0a030" />
      <circle cx="14.800" cy="16" r="14.300" fill="#f8d93c" />
      <g clipPath="url(#coin)">
        <path d="M20 0L6 32H12L26 0ZM29 4L17 32H19.500L31 4Z" fill="#fae86a" />
      </g>
      <circle cx="15" cy="16" r="12.500" fill="none" stroke="#f4bd36" strokeWidth="1" />
      <path d="M5.500 15Q8 10.500 10.500 15M18 15Q20.500 10.500 23 15" fill="none" stroke="#fff" strokeWidth="1.300" strokeLinecap="round" />
      <path d="M11 18H18Q17.500 22 14.500 22Q11.500 22 11 18Z" fill="#fff" />
      <path d="M23 17L24 19.500L26.500 20.500L24 21.500L23 24L22 21.500L19.500 20.500L22 19.500ZM7 1L8 3.500L10 4.500L8 5.500L7 8L6 5.500L4 4.500L6 3.500Z" fill="#fff" />
    </svg>
  );
}

function NavItem({ label, width, active, children }: { label: string; width: string; active?: boolean; children: React.ReactNode }) {
  return (
    <button className={`flex flex-col items-center gap-[9px] pt-10 ${width} ${active ? "text-[#de524c]" : "text-[#9ca3af]"}`}>
      {children}
      <span className="text-[24px] leading-8 tracking-[-0.1px]">{label}</span>
    </button>
  );
}

export default function App() {
  return (
    <div className="relative h-[1654px] w-[1922px] overflow-hidden bg-white font-['Inter',sans-serif]">
      <div className="relative h-[630px] overflow-hidden">
        <MapCanvas />
        <div className="absolute right-7 top-[432px] h-20 w-20 rounded-2xl bg-white shadow-[0_8px_24px_rgba(0,0,0,0.12)]" />
        <button className="absolute right-7 top-[528px] flex h-20 w-20 items-center justify-center rounded-2xl bg-white text-black shadow-[0_8px_24px_rgba(0,0,0,0.12)]">
          <MdMyLocation size={48} />
        </button>
        <div className="absolute inset-x-0 top-0 h-[500px] bg-[linear-gradient(to_bottom,rgba(0,0,0,0.66)_0px,rgba(0,0,0,0.58)_100px,rgba(0,0,0,0.45)_190px,rgba(0,0,0,0.33)_275px,rgba(0,0,0,0.21)_350px,rgba(0,0,0,0.07)_430px,rgba(0,0,0,0)_500px)]" />

        <div className="absolute inset-x-0 top-0 flex flex-col pl-[26px] pr-7">
          <header className="flex h-[276px] items-start justify-between pt-[106px]">
            <div className="flex h-16 items-center gap-[17px]">
              <Logo />
              <span className="text-[34px] font-bold leading-none text-white">Jemzy</span>
            </div>
            <div className="flex h-16 items-center gap-6">
              <div className="flex h-14 w-[106px] items-center gap-[9px] rounded-full bg-black/50 pl-[23px] text-white">
                <Coin />
                <span className="text-[28px] font-medium leading-none">9</span>
              </div>
              <button className="flex h-16 w-16 items-center justify-center rounded-full bg-black/50 text-white">
                <FiBell size={32} />
              </button>
            </div>
          </header>

          <section className="flex h-[224px] flex-col gap-6 rounded-[32px] bg-white p-6 shadow-[0_16px_36px_-4px_rgba(0,0,0,0.22)]">
            <div className="flex h-20 items-center gap-4">
              <div className="flex h-20 flex-1 items-center gap-[26px] rounded-3xl border-2 border-gray-200 pl-[22px]">
                <FiSearch size={32} className="text-[#9ca3af]" />
                <span className="pt-0.5 text-[28px] tracking-[-0.34px] text-[#78716c]">Search location &amp; categories</span>
              </div>
              <button className="flex h-[72px] w-[68px] items-center justify-center rounded-3xl border-2 border-gray-200 text-[#4b5563]">
                <Stroke size={32}>
                  <path d="M4 21v-7M4 10V3M12 21v-9M12 8V3M20 21v-5M20 12V3M2 14h4M10 8h4M18 16h4" />
                </Stroke>
              </button>
            </div>
            <div className="flex gap-4">
              {categories.map(({ name, width, ...gem }) => (
                <button key={name} className={`flex h-[72px] shrink-0 items-center gap-4 rounded-full bg-gray-100 pl-8 text-[28px] font-medium text-[#374151] ${width}`}>
                  <Gem {...gem} />
                  <span className="tracking-[-0.25px]">{name}</span>
                </button>
              ))}
            </div>
          </section>
        </div>
      </div>

      <nav className="flex h-[180px] border-t-2 border-gray-200 bg-white">
        <NavItem label="Map" width="w-[362px]" active>
          <MapPin size={48} />
        </NavItem>
        <NavItem label="Videos" width="w-[415px]">
          <Video size={48} />
        </NavItem>
        <div className="flex w-[360px] justify-center pt-1">
          <button className="flex h-28 w-28 items-center justify-center rounded-full bg-[#de524c] text-white shadow-[0_20px_30px_-6px_rgba(0,0,0,0.12)]">
            <Plus size={32} />
          </button>
        </div>
        <NavItem label="Liked" width="w-[398px]">
          <Stroke size={48}>
            <path d="M19 14c1.49-1.46 3-3.21 3-5.5A5.5 5.5 0 0 0 16.5 3c-1.76 0-3 .5-4.5 2-1.5-1.5-2.74-2-4.5-2A5.5 5.5 0 0 0 2 8.5c0 2.3 1.5 4.05 3 5.5l7 7Z" />
          </Stroke>
        </NavItem>
        <NavItem label="Profile" width="w-[384px]">
          <Stroke size={48}>
            <path d="M19 21v-2a4 4 0 0 0-4-4H9a4 4 0 0 0-4 4v2" />
            <circle cx="12" cy="7" r="4" />
          </Stroke>
        </NavItem>
      </nav>
    </div>
  );
}
